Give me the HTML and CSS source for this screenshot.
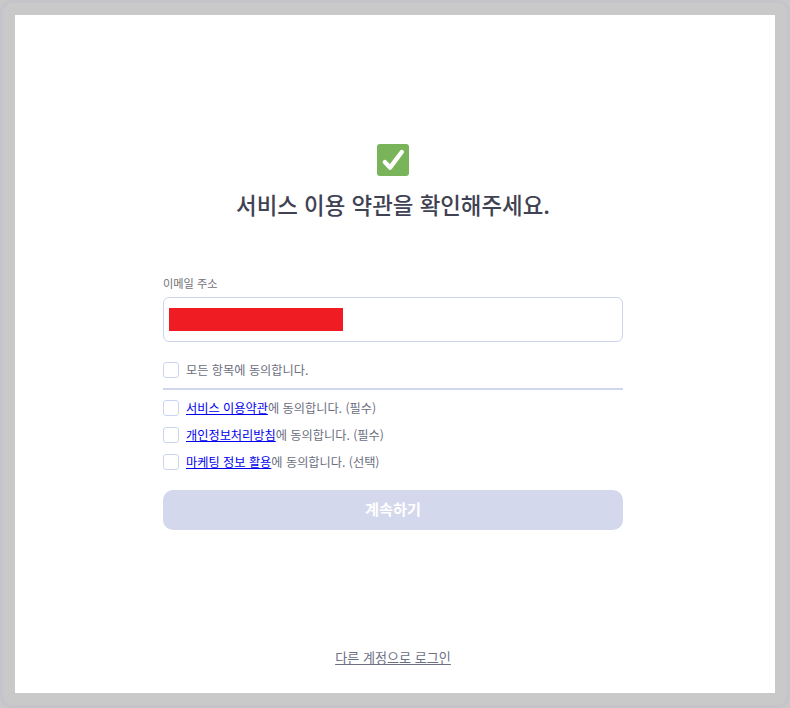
FILE: index.html
```html
<!DOCTYPE html>
<html lang="ko">
<head>
<meta charset="utf-8">
<title>서비스 이용 약관</title>
<link rel="stylesheet" href="styles.css">
</head>
<body>
<div class="frame">
  <main class="panel">
    <svg class="icon" width="33" height="33" viewBox="0 0 33 33" aria-hidden="true">
      <rect x="0" y="0" width="32" height="32" rx="3" fill="#79b45a"/>
      <path d="M7.8 18 L13 23.6 L24.8 8" fill="none" stroke="#fff" stroke-width="4.4" stroke-linecap="round" stroke-linejoin="round"/>
    </svg>
    <h1 class="title">서비스 이용 약관을 확인해주세요.</h1>
    <form class="form">
      <div class="label">이메일 주소</div>
      <div class="input"><span class="redact"></span></div>
      <div class="row row-all"><span class="box"></span><span class="txt">모든 항목에 동의합니다.</span></div>
      <div class="divider"></div>
      <div class="terms">
        <div class="row"><span class="box"></span><span class="txt"><a href="#">서비스 이용약관</a>에 동의합니다. (필수)</span></div>
        <div class="row"><span class="box"></span><span class="txt"><a href="#">개인정보처리방침</a>에 동의합니다. (필수)</span></div>
        <div class="row"><span class="box"></span><span class="txt"><a href="#">마케팅 정보 활용</a>에 동의합니다. (선택)</span></div>
      </div>
      <div class="submit">계속하기</div>
    </form>
    <a class="other" href="#">다른 계정으로 로그인</a>
  </main>
</div>
</body>
</html>
```
FILE: styles.css
```css
* { box-sizing: border-box; }
html, body { margin: 0; height: 100%; background: #c9c9c9; }
body { font-family: "Noto Sans CJK KR", "Noto Sans", sans-serif; overflow: hidden; }
.frame {
  width: 790px; height: 708px; padding: 12px;
  background: #c9c9c9;
  border: 3px solid #c4c4ca;
  border-radius: 12px;
}
.panel {
  height: 678px; background: #fff;
  display: flex; flex-direction: column; align-items: center;
  padding: 129px 4px 0 0;
}
.icon { display: block; flex: none; }
.title {
  margin: 11px 0 0; font-size: 22.4px; line-height: 32px; font-weight: 500;
  color: #3f4253;
}
.form { width: 460px; margin-top: 54px; display: flex; flex-direction: column; }
.label { font-size: 11.2px; line-height: 18px; color: #6f6f76; }
.input {
  margin-top: 5px; height: 45px; border: 1px solid #cdd4ef; border-radius: 6px;
  padding: 10px 5px;
}
.redact { display: block; width: 174px; height: 23px; background: #ef1c24; }
.row { display: flex; align-items: center; gap: 7px; height: 16px; }
.row-all { margin-top: 20px; }
.box { width: 16px; height: 16px; flex: none; border: 1px solid #cdd4ef; border-radius: 3px; background: #fff; }
.txt { font-size: 12.2px; line-height: 16px; color: #6b6e80; }
.txt a { color: #0000ee; text-decoration: underline; }
.divider { height: 2px; background: #d0d6ee; margin-top: 10px; }
.terms { margin-top: 10px; display: flex; flex-direction: column; gap: 11px; }
.submit {
  margin-top: 20px; height: 40px; border-radius: 10px; background: #d3d8ed;
  color: #fff; font-size: 15.2px; font-weight: 700; line-height: 37px; text-align: center;
}
.other {
  margin-top: auto; margin-bottom: 26px; font-size: 13.1px; line-height: 18px;
  color: #6d6f85; text-decoration: underline;
}
```
